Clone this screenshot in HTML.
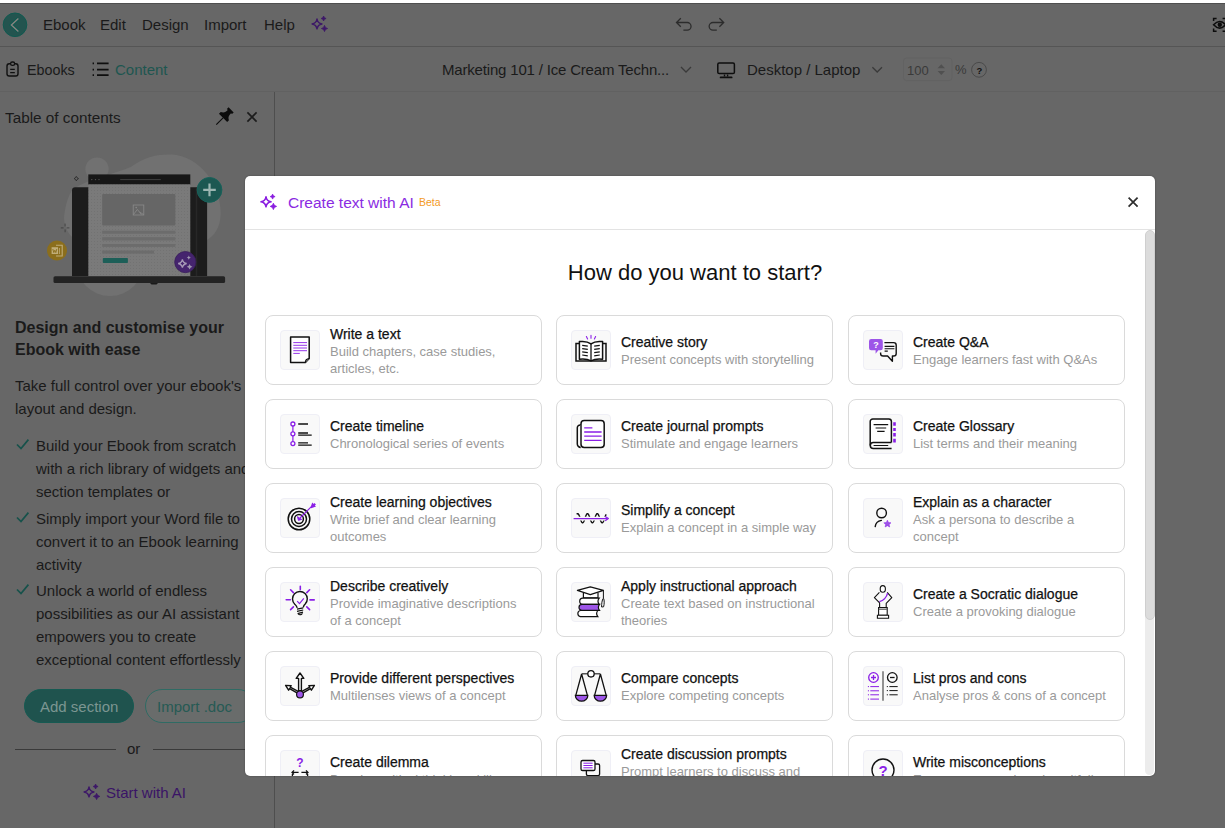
<!DOCTYPE html>
<html><head><meta charset="utf-8">
<style>
*{box-sizing:border-box;margin:0;padding:0}
html,body{width:1225px;height:828px;overflow:hidden;background:#676767;font-family:"Liberation Sans",sans-serif;color:#111}
.abs{position:absolute}
#topstrip{position:absolute;left:0;top:0;width:1225px;height:3px;background:#fff}
.hline{position:absolute;left:0;width:1225px;height:1px;background:#555}
.menu{position:absolute;top:16px;font-size:15px;color:#1a1a1a;white-space:nowrap}
.t2{position:absolute;font-size:15px;color:#1a1a1a;white-space:nowrap}
#panel{position:absolute;left:0;top:92px;width:275px;height:736px;border-right:1px solid #4e4e4e}
.p{position:absolute;white-space:nowrap;color:#1a1a1a}
#modal{position:absolute;left:245px;top:176px;width:910px;height:600px;background:#fff;border-radius:5px;overflow:hidden;box-shadow:0 0 1.5px rgba(0,0,0,.45)}
#mhead{position:absolute;left:0;top:0;width:910px;height:54px;border-bottom:1px solid #e3e3e3}
.card{position:absolute;width:277px;height:70px;border:1px solid #dadada;border-radius:8px;background:#fff}
.ib{position:absolute;left:14px;top:14px;width:40px;height:40px;background:#f9f9f9;border:1px solid #efeff6;border-radius:4px}
.ib svg{position:absolute;left:-1px;top:-1px}
.tx{position:absolute;left:64px;top:0;height:68px;display:flex;flex-direction:column;justify-content:center}
.ct{position:relative;top:1.4px;font-size:14px;line-height:19px;color:#111;white-space:nowrap;-webkit-text-stroke:0.25px #111}
.cd{font-size:13px;color:#9a9a9a;line-height:17px;white-space:nowrap}
#track{position:absolute;left:900px;top:62px;width:9px;height:537px;background:#ececec;border-radius:0 0 5px 5px}
#thumb{position:absolute;left:900px;top:54px;width:9.5px;height:390px;background:#dcdcdc;border:1px solid #cfcfcf;border-radius:5px}
</style></head><body>
<div id="topstrip"></div>
<div class="hline" style="top:3px;background:#4f4f4f"></div>
<div class="hline" style="top:46px"></div>
<div class="hline" style="top:91px;background:#616161"></div>

<!-- header row 1 -->
<div class="menu" style="left:43px">Ebook</div>
<div class="menu" style="left:100px">Edit</div>
<div class="menu" style="left:142px">Design</div>
<div class="menu" style="left:204px">Import</div>
<div class="menu" style="left:264px">Help</div>

<!-- header row 2 -->
<div class="t2" style="left:27px;top:62px;font-size:14.3px">Ebooks</div>
<div class="t2" style="left:115px;top:61px;color:#1e5650">Content</div>
<div class="t2" style="left:442px;top:61px;letter-spacing:-0.18px">Marketing 101 / Ice Cream Techn...</div>
<div class="t2" style="left:747px;top:61px">Desktop / Laptop</div>
<div class="t2" style="left:907px;top:63px;font-size:13px;color:#3a3a3a">100</div>
<div class="t2" style="left:955px;top:62px;font-size:13px;color:#3a3a3a">%</div>


<!-- header icons -->
<svg class="abs" style="left:0;top:0" width="1225" height="92" viewBox="0 0 1225 92">
  <circle cx="15" cy="24.8" r="11.8" fill="#23544f" stroke="#0f5a50" stroke-width="1"/>
  <path d="M18.4 18.4L11.4 25L18.4 31.6" fill="none" stroke="#0f5a50" stroke-width="3.4"/>
  <path d="M18.4 18.4L11.4 25L18.4 31.6" fill="none" stroke="#8a8380" stroke-width="1.4"/>
  <path d="M317.00 19.00Q317.69 23.21 321.90 23.90Q317.69 24.59 317.00 28.80Q316.31 24.59 312.10 23.90Q316.31 23.21 317.00 19.00Z" fill="none" stroke="#3d1868" stroke-width="1.5" stroke-linejoin="round"/><path d="M323.60 16.00Q323.95 18.15 326.10 18.50Q323.95 18.85 323.60 21.00Q323.25 18.85 321.10 18.50Q323.25 18.15 323.60 16.00Z" fill="#3d1868" stroke="#3d1868" stroke-width="0.8" stroke-linejoin="round"/><path d="M324.50 25.40Q324.93 28.07 327.60 28.50Q324.93 28.93 324.50 31.60Q324.07 28.93 321.40 28.50Q324.07 28.07 324.50 25.40Z" fill="#3d1868" stroke="#3d1868" stroke-width="0.8" stroke-linejoin="round"/>
  <path d="M680.8 18.2L676.5 22.5L680.8 26.8M676.8 22.5H687.2A3.85 3.85 0 0 1 687.2 30.2H683.4" fill="none" stroke="#2c2c2c" stroke-width="1.3"/>
  <path d="M719.4 18.2L723.7 22.5L719.4 26.8M723.4 22.5H713A3.85 3.85 0 0 0 713 30.2H716.8" fill="none" stroke="#2c2c2c" stroke-width="1.3"/>
  <path d="M1213.6 21V18.4H1216.6M1213.6 28.6V31.2H1216.6M1225 18.4H1222.6M1225 31.2H1222.6" fill="none" stroke="#0c0c0c" stroke-width="1.5"/>
  <path d="M1213.6 24.8Q1219.6 18.2 1225.6 24.8Q1219.6 31.4 1213.6 24.8Z" fill="none" stroke="#0c0c0c" stroke-width="1.6"/>
  <circle cx="1219.8" cy="24.8" r="2.2" fill="#0c0c0c"/>
  <!-- row2 -->
  <rect x="7" y="63.8" width="11" height="12.2" rx="2.2" fill="none" stroke="#111" stroke-width="1.4"/>
  <rect x="10.6" y="62" width="4" height="3.4" rx="1.6" fill="#676767" stroke="#111" stroke-width="1.3"/>
  <path d="M10.2 69.4H14.8M10.2 72.6H14.8" stroke="#111" stroke-width="1.3"/>
  <path d="M92.6 63.4H94M97 63.4H108.6M92.6 69.6H94M97 69.6H108.6M92.6 75.1H94M97 75.1H108.6" stroke="#0e0e0e" stroke-width="1.8"/>
  <path d="M681 67L686 72L691 67" fill="none" stroke="#3a3a3a" stroke-width="1.3"/>
  <rect x="717.8" y="63" width="16.6" height="10.6" rx="1.4" fill="none" stroke="#0e0e0e" stroke-width="1.5"/>
  <path d="M724.5 74.5V76.4M727.6 74.5V76.4" stroke="#0e0e0e" stroke-width="1.4"/>
  <path d="M720.6 77.4H731.6" stroke="#0e0e0e" stroke-width="1.8" stroke-linecap="round"/>
  <path d="M872.4 67.2L877.2 72L882 67.2" fill="none" stroke="#3a3a3a" stroke-width="1.3"/>
  <rect x="903.5" y="58" width="48.5" height="22.6" rx="3" fill="none" stroke="#626262" stroke-width="1"/>
  <path d="M937.6 68.2L941.3 64.2L945 68.2ZM937.6 71L941.3 75L945 71Z" fill="#505050"/>
  <circle cx="979" cy="69.8" r="7.4" fill="none" stroke="#4a4a4a" stroke-width="1"/>
</svg>
<div class="t2" style="left:976.5px;top:64.5px;font-size:9.5px;font-weight:bold;color:#111">?</div>
<!-- panel icons -->
<svg class="abs" style="left:0;top:92px" width="275" height="736" viewBox="0 92 275 736">
  <g transform="translate(221.8 119.2) rotate(45)"><path d="M-3.6 -13.2H3.6V-10.8H2.3C2.3 -8 2.6 -6 5.8 -4.3V-1.8H-5.8V-4.3C-2.6 -6 -2.3 -8 -2.3 -10.8H-3.6Z" fill="#0c0c0c"/><path d="M0 -1.8V7.8" stroke="#0c0c0c" stroke-width="1.1"/></g>
  <path d="M247.4 112.4L256.6 121.6M256.6 112.4L247.4 121.6" stroke="#1c1c1c" stroke-width="1.6"/>
  <path d="M17 444.5L21 448.6L28.4 439.6M17 517.5L21 521.6L28.4 512.6M17 589.5L21 593.6L28.4 584.6" fill="none" stroke="#17524b" stroke-width="1.7"/>
  <path d="M89.00 787.00Q89.69 791.21 93.90 791.90Q89.69 792.59 89.00 796.80Q88.31 792.59 84.10 791.90Q88.31 791.21 89.00 787.00Z" fill="none" stroke="#3d1868" stroke-width="1.5" stroke-linejoin="round"/><path d="M95.60 784.00Q95.95 786.15 98.10 786.50Q95.95 786.85 95.60 789.00Q95.25 786.85 93.10 786.50Q95.25 786.15 95.60 784.00Z" fill="#3d1868" stroke="#3d1868" stroke-width="0.8" stroke-linejoin="round"/><path d="M96.60 793.20Q97.05 795.95 99.80 796.40Q97.05 796.85 96.60 799.60Q96.15 796.85 93.40 796.40Q96.15 795.95 96.60 793.20Z" fill="#3d1868" stroke="#3d1868" stroke-width="0.8" stroke-linejoin="round"/>
</svg>

<div id="illus" class="abs" style="left:0;top:0;width:275px;height:320px"><svg class="abs" style="left:0;top:0" width="275" height="320" viewBox="0 0 275 320">
<defs><pattern id="dots" width="3" height="3" patternUnits="userSpaceOnUse"><rect width="3" height="3" fill="#7a7a7a"/><rect x="1" y="1" width="1" height="1" fill="#727272"/></pattern></defs>
<g fill="#717171">
<path d="M130.8 167C145 156 160 154 171.4 154.5C200 156 221 185 220.7 213.4C220.5 228 214 236 206 240.5L150 276L72 262L72 237C66 231 63.5 223 64.2 215.4C66 203 68 196 73 189C90 178 115 174 130.8 167Z"/>
<circle cx="110" cy="262" r="34"/>
<circle cx="97" cy="169" r="11.6"/>
</g>
<path d="M72 276V190.5A3.2 3.2 0 0 1 75.2 187.3H203.9A3.2 3.2 0 0 1 207.1 190.5V276Z" fill="#1c1c1c"/>
<rect x="88.3" y="174.4" width="102" height="10.2" fill="#171717"/>
<rect x="88.3" y="184.4" width="102" height="91.8" fill="url(#dots)"/>
<circle cx="91.8" cy="179.6" r="0.7" fill="#555"/><circle cx="95.5" cy="179.6" r="0.7" fill="#555"/><circle cx="99" cy="179.6" r="0.7" fill="#555"/>
<path d="M120.2 179.6H160.8" stroke="#4a4a4a" stroke-width="0.8"/>
<rect x="102.2" y="194.1" width="73.1" height="31.5" rx="1" fill="#666"/>
<rect x="133.2" y="205" width="10.6" height="10" fill="none" stroke="#8a8a8a" stroke-width="0.8"/>
<path d="M133.4 214.6L137.4 209.4L141.4 214.6M139.6 212L143.6 214.6" fill="none" stroke="#8a8a8a" stroke-width="0.8"/>
<circle cx="136.2" cy="207.6" r="0.8" fill="#8a8a8a"/>
<g fill="#6c6c6c">
<rect x="102.2" y="230.8" width="73.1" height="2.9"/>
<rect x="102.2" y="237.2" width="73.1" height="3.3"/>
<rect x="102.2" y="244" width="73.1" height="2.9"/>
<rect x="102.2" y="250.5" width="51.8" height="3.1"/>
</g>
<rect x="102.8" y="257.9" width="25.1" height="5.2" rx="0.8" fill="#1d5f58"/>
<path d="M196.5 188V276" stroke="#272727" stroke-width="1.5"/>
<rect x="53.5" y="276.2" width="171.6" height="6.8" rx="1.6" fill="#232323"/>
<path d="M150 283H158L156.5 284.6H151.5Z" fill="#1a1a1a"/>
<circle cx="209.5" cy="189.9" r="12.4" fill="#1c5852" stroke="#17625a" stroke-width="1"/>
<path d="M209.5 183.6V196.2M203.2 189.9H215.8" stroke="#9cb6b2" stroke-width="2.2"/>
<circle cx="185.3" cy="262.1" r="10.6" fill="#45246e" stroke="#3a1f5c" stroke-width="0.8"/>
<path d="M182.40 259.30Q183.07 262.83 186.60 263.50Q183.07 264.17 182.40 267.70Q181.73 264.17 178.20 263.50Q181.73 262.83 182.40 259.30Z" fill="none" stroke="#a89cb8" stroke-width="1.3"/>
<path d="M188.80 255.50Q189.14 257.26 190.90 257.60Q189.14 257.94 188.80 259.70Q188.46 257.94 186.70 257.60Q188.46 257.26 188.80 255.50Z" fill="#a098b0"/>
<path d="M189.60 264.00Q190.05 266.35 192.40 266.80Q190.05 267.25 189.60 269.60Q189.15 267.25 186.80 266.80Q189.15 266.35 189.60 264.00Z" fill="#a098b0"/>
<circle cx="57" cy="250.5" r="10" fill="#8b6e1c"/>
<path d="M56 245.2H62.2V256H56" fill="none" stroke="#c0ad78" stroke-width="1.1"/>
<rect x="51.6" y="247.2" width="6.4" height="6.8" fill="#c0ad78"/>
<path d="M52.8 249L53.8 252.6L54.8 250.2L55.8 252.6L56.8 249" fill="none" stroke="#8b6e1c" stroke-width="0.9"/>
<path d="M59.4 248V254" stroke="#c0ad78" stroke-width="0.9"/>
<path d="M76.30 176.40Q76.85 178.05 78.50 178.60Q76.85 179.15 76.30 180.80Q75.75 179.15 74.10 178.60Q75.75 178.05 76.30 176.40Z" fill="none" stroke="#222" stroke-width="0.8"/>
<path d="M65.1 223.6V226.4M65.1 229.4V232.2M60.8 227.9H63.6M66.6 227.9H69.4" stroke="#333" stroke-width="0.7"/>
</svg></div>
<div id="panel">
  <div class="p" style="left:5px;top:17px;font-size:15.3px">Table of contents</div>
  <div class="p" style="left:15px;top:225px;font-size:16px;font-weight:bold;line-height:22px">Design and customise your<br>Ebook with ease</div>
  <div class="p" style="left:15px;top:282px;font-size:15px;line-height:23px">Take full control over your ebook's<br>layout and design.</div>
  <div class="p" style="left:36px;top:342px;font-size:15px;line-height:23px">Build your Ebook from scratch<br>with a rich library of widgets and<br>section templates or</div>
  <div class="p" style="left:36px;top:415px;font-size:15px;line-height:23px">Simply import your Word file to<br>convert it to an Ebook learning<br>activity</div>
  <div class="p" style="left:36px;top:487px;font-size:15px;line-height:23px">Unlock a world of endless<br>possibilities as our AI assistant<br>empowers you to create<br>exceptional content effortlessly</div>
  <div class="abs" style="left:24px;top:597px;width:110px;height:34px;border-radius:17px;background:#1f534e;border:1px solid #165a52"></div>
  <div class="p" style="left:40px;top:606px;font-size:15px;color:#7c9692">Add section</div>
  <div class="abs" style="left:145px;top:597px;width:110px;height:34px;border-radius:17px;border:1px solid #2f6b64;background:#696c6b"></div>
  <div class="p" style="left:157px;top:606px;font-size:15px;color:#265a54">Import .doc</div>
  <div class="p" style="left:127px;top:648px;font-size:15px">or</div>
  <div class="abs" style="left:15px;top:656.5px;width:101px;height:1.6px;background:#3a3a3a"></div>
  <div class="abs" style="left:153px;top:656.5px;width:101px;height:1.6px;background:#3a3a3a"></div>
  <div class="p" style="left:106px;top:692px;font-size:15px;color:#3a1466">Start with AI</div>
</div>

<div id="modal">
  <div id="mhead">
    <svg class="abs" style="left:-245px;top:-176px" width="300" height="230" viewBox="0 0 300 230"><path d="M266.00 196.80Q266.70 201.10 271.00 201.80Q266.70 202.50 266.00 206.80Q265.30 202.50 261.00 201.80Q265.30 201.10 266.00 196.80Z" fill="none" stroke="#8a1ee0" stroke-width="1.6" stroke-linejoin="round"/><path d="M272.60 194.10Q272.95 196.25 275.10 196.60Q272.95 196.95 272.60 199.10Q272.25 196.95 270.10 196.60Q272.25 196.25 272.60 194.10Z" fill="#8a1ee0" stroke="#8a1ee0" stroke-width="0.8" stroke-linejoin="round"/><path d="M273.40 203.20Q273.85 205.95 276.60 206.40Q273.85 206.85 273.40 209.60Q272.95 206.85 270.20 206.40Q272.95 205.95 273.40 203.20Z" fill="#8a1ee0" stroke="#8a1ee0" stroke-width="0.8" stroke-linejoin="round"/></svg>
    <div class="p" style="left:43px;top:18px;font-size:15.5px;color:#8a2be2">Create text with AI</div>
    <svg class="abs" style="left:880px;top:18px" width="16" height="16" viewBox="0 0 16 16"><path d="M3.6 3.6L12.6 12.6M12.6 3.6L3.6 12.6" stroke="#2e2e2e" stroke-width="1.7"/></svg>
    <div class="p" style="left:174px;top:20px;font-size:10.5px;color:#f39a26">Beta</div>
  </div>
  <div class="p" style="left:0;width:900px;text-align:center;top:84px;font-size:22px;color:#111">How do you want to start?</div>
  <div id="cards">
<!--CARDS-->
<div class="card" style="left:20.00px;top:139px"><div class="ib"><svg width="40" height="40" viewBox="0 0 40 40"><path d="M10.6 7H29.2V28.6L25.4 32.6H10.6Z" fill="#fff" stroke="#111" stroke-width="1.5" stroke-linejoin="round"/>
<path d="M25.4 32.6C25.4 30.8 26.6 28.8 29.2 28.6" fill="#fff" stroke="#111" stroke-width="1.3"/>
<path d="M13.3 12.6H27M13.3 15.3H27M13.3 18H27M13.3 20.7H27M13.3 23.4H19.8" stroke="#8a1ee6" stroke-width="0.9"/></svg></div><div class="tx"><div class="ct">Write a text</div><div class="cd">Build chapters, case studies,<br>articles, etc.</div></div></div>
<div class="card" style="left:311.00px;top:139px"><div class="ib"><svg width="40" height="40" viewBox="0 0 40 40"><path d="M8.3 13.6H5V31H35V13.6H31.7" fill="none" stroke="#111" stroke-width="1.5"/>
<path d="M20 13.8C17 11.6 12.4 11.1 8.4 11.6V29.2C12.4 28.7 17 29.2 20 30.9C23 29.2 27.6 28.7 31.6 29.2V11.6C27.6 11.1 23 11.6 20 13.8Z" fill="#fff" stroke="#111" stroke-width="1.5" stroke-linejoin="round"/>
<path d="M20 13.8V30.6" stroke="#111" stroke-width="1.3"/>
<path d="M11.2 15.4L16.8 16.2M11.2 18.6L16.8 19.4M11.2 21.8L16.8 22.6M11.2 25L16.8 25.8M23.2 16.2L28.8 15.4M23.2 19.4L28.8 18.6M23.2 22.6L28.8 21.8M23.2 25.8L28.8 25" stroke="#111" stroke-width="1.2"/>
<path d="M15.4 6.6L16.6 9M20 5.4V8.2M24.6 6.6L23.4 9" stroke="#8a1ee6" stroke-width="1.1" stroke-linecap="round"/></svg></div><div class="tx"><div class="ct">Creative story</div><div class="cd">Present concepts with storytelling</div></div></div>
<div class="card" style="left:603.00px;top:139px"><div class="ib"><svg width="40" height="40" viewBox="0 0 40 40"><path d="M21.4 12.6H30.6A2.6 2.6 0 0 1 33.2 15.2V23.4A2.6 2.6 0 0 1 30.6 26H29.4V31.2L24.6 26H20.2A2.6 2.6 0 0 1 17.6 23.4V22.4" fill="none" stroke="#111" stroke-width="1.4" stroke-linejoin="round"/>
<path d="M21.6 16.4H31.4M21.6 18.7H31.4M21.6 21.1H24.8" stroke="#111" stroke-width="1.1"/>
<path d="M8.2 9H17.6A2.2 2.2 0 0 1 19.8 11.2V18A2.2 2.2 0 0 1 17.6 20.2H15.4L12.6 23.8V20.2H8.2A2.2 2.2 0 0 1 6 18V11.2A2.2 2.2 0 0 1 8.2 9Z" fill="#9d55e8"/>
<text x="13" y="18" font-size="9" font-weight="bold" fill="#fff" text-anchor="middle" font-family="Liberation Sans">?</text></svg></div><div class="tx"><div class="ct">Create Q&amp;A</div><div class="cd">Engage learners fast with Q&amp;As</div></div></div>
<div class="card" style="left:20.00px;top:223px"><div class="ib"><svg width="40" height="40" viewBox="0 0 40 40"><path d="M12.9 11.8V18M12.9 21.6V27.8" stroke="#8a1ee6" stroke-width="1.2"/>
<circle cx="12.9" cy="10" r="2" fill="#fff" stroke="#8a1ee6" stroke-width="1.3"/>
<circle cx="12.9" cy="19.8" r="2" fill="#fff" stroke="#8a1ee6" stroke-width="1.3"/>
<circle cx="12.9" cy="29.6" r="2" fill="#fff" stroke="#8a1ee6" stroke-width="1.3"/>
<path d="M18.2 10H28M18.2 19H28M18.2 21.2H31.7M18.2 28.8H28M18.2 31.2H31.7" stroke="#111" stroke-width="1.3"/></svg></div><div class="tx"><div class="ct">Create timeline</div><div class="cd">Chronological series of events</div></div></div>
<div class="card" style="left:311.00px;top:223px"><div class="ib"><svg width="40" height="40" viewBox="0 0 40 40"><path d="M9.9 10.9H9.2A2.9 2.9 0 0 0 6.3 13.8V30A3.4 3.4 0 0 0 9.7 33.4" fill="none" stroke="#111" stroke-width="1.5"/>
<rect x="10" y="6.6" width="23.2" height="26.8" rx="3.2" fill="#fff" stroke="#111" stroke-width="1.5"/>
<path d="M10 11V29.8" stroke="#555" stroke-width="1.3"/>
<path d="M13.2 13.8H21.4M13.2 18H30.6M13.2 22.2H30.6M13.2 26.4H30.6" stroke="#8a1ee6" stroke-width="1.3"/></svg></div><div class="tx"><div class="ct">Create journal prompts</div><div class="cd">Stimulate and engage learners</div></div></div>
<div class="card" style="left:603.00px;top:223px"><div class="ib"><svg width="40" height="40" viewBox="0 0 40 40"><path d="M28.4 28.4V7.6A2.6 2.6 0 0 0 25.8 5H9.8A2.6 2.6 0 0 0 7.2 7.6V31.4" fill="#fff" stroke="#111" stroke-width="1.5"/>
<path d="M28.4 28.6H10.3A3 3 0 0 0 10.3 34.6H28.6" fill="none" stroke="#111" stroke-width="1.5"/>
<path d="M10.6 10.6H25.2M12.6 14H23.2M14.2 17.4H21.6M10.6 31.5H25.2" stroke="#111" stroke-width="1.2"/>
<path d="M30.2 8.2h2.6v3.6h-2.6zM30.2 14h2.6v2.9h-2.6zM30.2 19h2.6v3.6h-2.6zM30.2 24.8h2.6v3.6h-2.6z" fill="#8a1ee6"/></svg></div><div class="tx"><div class="ct">Create Glossary</div><div class="cd">List terms and their meaning</div></div></div>
<div class="card" style="left:20.00px;top:307px"><div class="ib"><svg width="40" height="40" viewBox="0 0 40 40"><circle cx="19" cy="21" r="10.8" fill="none" stroke="#111" stroke-width="1.5"/>
<circle cx="19" cy="21" r="7.5" fill="none" stroke="#111" stroke-width="1.5"/>
<circle cx="19" cy="21" r="4.4" fill="none" stroke="#111" stroke-width="1.5"/>
<path d="M20 20L32.6 7.4" stroke="#8a1ee6" stroke-width="1.1"/>
<path d="M17.4 18.6L18.4 22.4L21.8 21.4Z" fill="#8a1ee6" stroke="#8a1ee6" stroke-width="0.8" stroke-linejoin="round"/>
<path d="M30.6 9.6L32.2 4.6L33.6 6L34.4 5L36 6.4L34.8 7.2L36 8.6L31.2 10.2Z" fill="#8a1ee6"/></svg></div><div class="tx"><div class="ct">Create learning objectives</div><div class="cd">Write brief and clear learning<br>outcomes</div></div></div>
<div class="card" style="left:311.00px;top:307px"><div class="ib"><svg width="40" height="40" viewBox="0 0 40 40"><polyline points="5.80,16.34 6.15,15.88 6.50,15.64 6.85,15.62 7.20,15.83 7.55,16.27 7.90,16.90 8.25,17.69 8.60,18.61 8.95,19.61 9.30,20.64 9.65,21.65 10.00,22.58 10.35,23.40 10.70,24.06 11.05,24.52 11.40,24.76 11.75,24.78 12.10,24.57 12.45,24.13 12.80,23.50 13.15,22.71 13.50,21.79 13.85,20.79 14.20,19.76 14.55,18.75 14.90,17.82 15.25,17.00 15.60,16.34 15.95,15.88 16.30,15.64 16.65,15.62 17.00,15.83 17.35,16.27 17.70,16.90 18.05,17.69 18.40,18.61 18.75,19.61 19.10,20.64 19.45,21.65 19.80,22.58 20.15,23.40 20.50,24.06 20.85,24.52 21.20,24.76 21.55,24.78 21.90,24.57 22.25,24.13 22.60,23.50 22.95,22.71 23.30,21.79 23.65,20.79 24.00,19.76 24.35,18.75 24.70,17.82 25.05,17.00 25.40,16.34 25.75,15.88 26.10,15.64 26.45,15.62 26.80,15.83 27.15,16.27 27.50,16.90 27.85,17.69 28.20,18.61 28.55,19.61 28.90,20.64 29.25,21.65 29.60,22.58 29.95,23.40 30.30,24.06 30.65,24.52 31.00,24.76 31.35,24.78 31.70,24.57 32.05,24.13 32.40,23.50 32.75,22.71 33.10,21.79 33.45,20.79 33.80,19.76 34.15,18.75 34.50,17.82 34.85,17.00 35.20,16.34" fill="none" stroke="#111" stroke-width="1.4"/>
<path d="M3 20.6H36" stroke="#f9f9f9" stroke-width="3.6"/>
<path d="M2.6 20.6H36.6" stroke="#8a1ee6" stroke-width="1.2"/>
<path d="M34.2 18.4L37.4 20.6L34.2 22.8" fill="none" stroke="#8a1ee6" stroke-width="1.2" stroke-linejoin="round"/></svg></div><div class="tx"><div class="ct">Simplify a concept</div><div class="cd">Explain a concept in a simple way</div></div></div>
<div class="card" style="left:603.00px;top:307px"><div class="ib"><svg width="40" height="40" viewBox="0 0 40 40"><circle cx="18.6" cy="15" r="4.8" fill="none" stroke="#111" stroke-width="1.4"/>
<path d="M12.2 28.6C12.6 25.2 15 23 18.4 22.4" fill="none" stroke="#111" stroke-width="1.4" stroke-linecap="round"/>
<path d="M24.4 22.2L25.5 24.6L28 24.8L26.1 26.5L26.7 29L24.4 27.7L22.1 29L22.7 26.5L20.8 24.8L23.3 24.6Z" fill="#9d55e8" stroke="#8a1ee6" stroke-width="0.5" stroke-linejoin="round"/></svg></div><div class="tx"><div class="ct">Explain as a character</div><div class="cd">Ask a persona to describe a<br>concept</div></div></div>
<div class="card" style="left:20.00px;top:391px"><div class="ib"><svg width="40" height="40" viewBox="0 0 40 40"><path d="M17 25.4C16.6 24 16 23.2 14.8 22.2A7.4 7.4 0 1 1 25.2 22C24 23 23.6 23.8 23.4 24.8" fill="none" stroke="#111" stroke-width="1.4" stroke-linecap="round"/>
<path d="M17 27.2L23.2 25.8M17 29.4L23.2 28M17.6 31.6L23 30.2" stroke="#111" stroke-width="1.2"/>
<path d="M18.4 31.8A1.8 1.2 0 0 0 22 31.2" fill="none" stroke="#111" stroke-width="1.2"/>
<path d="M17.2 19.2L19.5 21.6L23.8 16.4" fill="none" stroke="#8a1ee6" stroke-width="1.2"/>
<path d="M20.3 4.2V7.6M10.6 7.8L13.4 10.6M29.6 7.8L26.8 10.6M6.2 17.7H10.4M30 17.9H34.2M10.6 27.6L13.4 24.9M26.8 24.9L29.6 27.6" stroke="#8a1ee6" stroke-width="1.6" stroke-linecap="round"/></svg></div><div class="tx"><div class="ct">Describe creatively</div><div class="cd">Provide imaginative descriptions<br>of a concept</div></div></div>
<div class="card" style="left:311.00px;top:391px"><div class="ib"><svg width="40" height="40" viewBox="0 0 40 40"><path d="M12.4 10.6V15.8H27V10.6" fill="#fff" stroke="#111" stroke-width="1.2"/>
<path d="M6.4 8.4L19.3 4.8L32.4 8.4L19.3 12.6Z" fill="#fff" stroke="#111" stroke-width="1.2" stroke-linejoin="round"/>
<path d="M32.4 8.4V16.2" stroke="#111" stroke-width="1"/>
<path d="M32.2 16.4C31 18 30.6 22 30.6 25L32.6 24.8C33.4 22 33.4 18 32.6 16.4Z" fill="#fff" stroke="#111" stroke-width="1"/>
<path d="M28.2 16.2H11.8A3 3 0 0 0 11.8 22.4H28.2A5 5 0 0 1 28.2 16.2Z" fill="#fff" stroke="#111" stroke-width="1.2"/>
<path d="M28.5 22.4H11A3 3 0 0 0 11 28.4H28.5A5 5 0 0 1 28.5 22.4Z" fill="#9d55e8" stroke="#111" stroke-width="1.2"/>
<path d="M26.8 28.5H9.4A3.1 3.1 0 0 0 9.4 34.6H26.8A5 5 0 0 1 26.8 28.5Z" fill="#fff" stroke="#111" stroke-width="1.2"/></svg></div><div class="tx"><div class="ct">Apply instructional approach</div><div class="cd">Create text based on instructional<br>theories</div></div></div>
<div class="card" style="left:603.00px;top:391px"><div class="ib"><svg width="40" height="40" viewBox="0 0 40 40"><ellipse cx="19.8" cy="6.9" rx="2.6" ry="3.3" fill="#fff" stroke="#111" stroke-width="1.1"/>
<path d="M16.4 10.4L11.4 15.6L16.6 20.8V25.6M23.2 25.6V21.4L28.8 15.6L24.2 10.4" fill="none" stroke="#111" stroke-width="1.1" stroke-linejoin="round"/>
<path d="M16.4 10.4C18 11.2 21.6 11.2 24.2 10.4" fill="none" stroke="#111" stroke-width="0"/>
<path d="M16.4 19.6C20 18.8 23.6 15.4 24.6 11.2" fill="none" stroke="#8a1ee6" stroke-width="1.4"/>
<path d="M15.6 25.6H24.2V33.2H15.6Z" fill="#fff" stroke="#111" stroke-width="1.1"/>
<path d="M15.8 27.4H24" stroke="#666" stroke-width="1"/>
<path d="M14.4 33.2H25.6V36.2H14.4Z" fill="#fff" stroke="#111" stroke-width="1.1"/></svg></div><div class="tx"><div class="ct">Create a Socratic dialogue</div><div class="cd">Create a provoking dialogue</div></div></div>
<div class="card" style="left:20.00px;top:475px"><div class="ib"><svg width="40" height="40" viewBox="0 0 40 40"><path d="M18.6 24.6V12.4H16.2L20 7L23.8 12.4H21.4V24.6Z" fill="#fff" stroke="#111" stroke-width="1.4" stroke-linejoin="round"/>
<path d="M17.4 27.2L9.6 22.6L8.6 24.2L5.6 19.4L11.2 19.6L10.2 21.2L18.6 25.6Z" fill="#fff" stroke="#111" stroke-width="1.4" stroke-linejoin="round"/>
<path d="M22.6 27.2L30.4 22.6L31.4 24.2L34.4 19.4L28.8 19.6L29.8 21.2L21.4 25.6Z" fill="#fff" stroke="#111" stroke-width="1.4" stroke-linejoin="round"/>
<circle cx="20" cy="28.4" r="3.4" fill="#9d55e8" stroke="#111" stroke-width="1.2"/></svg></div><div class="tx"><div class="ct">Provide different perspectives</div><div class="cd">Multilenses views of a concept</div></div></div>
<div class="card" style="left:311.00px;top:475px"><div class="ib"><svg width="40" height="40" viewBox="0 0 40 40"><path d="M10.6 7.8H17M23 7.8H29.4" stroke="#555" stroke-width="1.4"/>
<circle cx="20" cy="7.8" r="3.2" fill="#fff" stroke="#111" stroke-width="1.3"/>
<path d="M10.6 8L4.8 29.4M10.6 8L16.4 29.4M29.4 8L23.6 29.4M29.4 8L35.2 29.4" stroke="#111" stroke-width="1.3"/>
<path d="M4.4 29.4H16.8A6.2 5.8 0 0 1 4.4 29.4Z" fill="#9d55e8" stroke="#111" stroke-width="1.3"/>
<path d="M23.2 29.4H35.6A6.2 5.8 0 0 1 23.2 29.4Z" fill="#9d55e8" stroke="#111" stroke-width="1.3"/></svg></div><div class="tx"><div class="ct">Compare concepts</div><div class="cd">Explore competing concepts</div></div></div>
<div class="card" style="left:603.00px;top:475px"><div class="ib"><svg width="40" height="40" viewBox="0 0 40 40"><circle cx="10.5" cy="11.5" r="4.8" fill="none" stroke="#8a1ee6" stroke-width="1.3"/>
<path d="M10.5 9V14M8 11.5H13" stroke="#8a1ee6" stroke-width="1.3"/>
<circle cx="29.3" cy="11.5" r="4.8" fill="none" stroke="#111" stroke-width="1.3"/>
<path d="M27 11.5H31.6" stroke="#111" stroke-width="1.3"/>
<path d="M20 5.2V34.7" stroke="#777" stroke-width="1.6"/>
<path d="M4.9 20.6H6M7.3 20.6H16M4.9 24.8H6M7.3 24.8H16M4.9 28.8H6M7.3 28.8H16M4.9 33.1H6M7.3 33.1H16" stroke="#8a1ee6" stroke-width="1"/>
<path d="M23.8 20.6H24.9M26.4 20.6H34.7M23.8 24.6H24.9M26.4 24.6H34.7M23.8 28.8H24.9M26.4 28.8H34.7" stroke="#111" stroke-width="1"/></svg></div><div class="tx"><div class="ct">List pros and cons</div><div class="cd">Analyse pros &amp; cons of a concept</div></div></div>
<div class="card" style="left:20.00px;top:559px"><div class="ib"><svg width="40" height="40" viewBox="0 0 40 40"><text x="20" y="17" font-size="12" font-weight="bold" fill="#8a1ee6" text-anchor="middle" font-family="Liberation Sans">?</text>
<path d="M12 22.4H18.6M14 20.4L12 22.4L14 24.4M28 22.4H21.4M26 20.4L28 22.4L26 24.4M12.4 22.4V30M27.6 22.4V30" fill="none" stroke="#111" stroke-width="1.3"/></svg></div><div class="tx"><div class="ct">Create dilemma</div><div class="cd">Develop critical thinking skills</div></div></div>
<div class="card" style="left:311.00px;top:559px"><div class="ib"><svg width="40" height="40" viewBox="0 0 40 40"><rect x="10" y="10.5" width="14" height="10" rx="1.6" fill="#fff" stroke="#111" stroke-width="1.3"/>
<path d="M12.4 13.2H21.6M12.4 15.5H21.6M12.4 17.8H21.6" stroke="#8a1ee6" stroke-width="1"/>
<path d="M24 14H27A1.6 1.6 0 0 1 28.6 15.6V24A1.6 1.6 0 0 1 27 25.6H17A1.6 1.6 0 0 1 15.4 24V20.5" fill="none" stroke="#111" stroke-width="1.3"/></svg></div><div class="tx"><div class="ct">Create discussion prompts</div><div class="cd">Prompt learners to discuss and<br>debate</div></div></div>
<div class="card" style="left:603.00px;top:559px"><div class="ib"><svg width="40" height="40" viewBox="0 0 40 40"><circle cx="20" cy="20" r="11" fill="none" stroke="#111" stroke-width="1.4"/>
<text x="20" y="25.5" font-size="15" font-weight="bold" fill="#8a1ee6" text-anchor="middle" font-family="Liberation Sans">?</text></svg></div><div class="tx"><div class="ct">Write misconceptions</div><div class="cd">Expose common learning pitfalls</div></div></div>
<!--/CARDS-->
</div>
  <div id="track"></div><div id="thumb"></div>
</div>
</body></html>
